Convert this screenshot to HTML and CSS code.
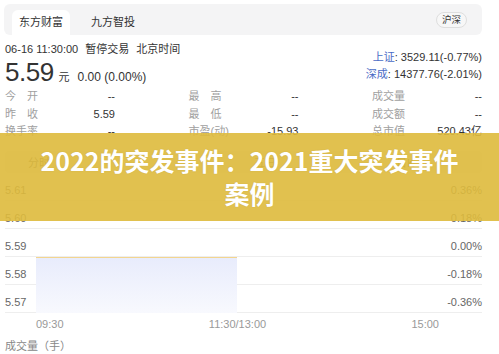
FILE: index.html
```html
<!DOCTYPE html>
<html lang="zh-CN">
<head>
<meta charset="utf-8">
<title>东方财富</title>
<link rel="stylesheet" href="styles.css">
</head>
<body>
<div class="page">
  <div class="tabbar">
    <div class="tab active">东方财富</div>
    <div class="tab">九方智投</div>
    <div class="pill">沪深</div>
  </div>

  <div class="quote">
    <div class="quote-left">
      <div class="meta"><span>06-16 11:30:00</span><span class="gap">暂停交易</span><span class="gap">北京时间</span></div>
      <div class="price-line"><span class="price">5.59</span><span class="unit">元</span><span class="change">0.00 (0.00%)</span></div>
    </div>
    <div class="quote-right">
      <div><span class="idx">上证</span>: 3529.11(-0.77%)</div>
      <div><span class="idx">深成</span>: 14377.76(-2.01%)</div>
    </div>
  </div>

  <div class="stats">
    <div class="row">
      <div class="grp"><span class="lbl">今开</span><span class="val">--</span></div>
      <div class="grp"><span class="lbl">最高</span><span class="val">--</span></div>
      <div class="grp"><span class="lbl">成交量</span><span class="val">--</span></div>
    </div>
    <div class="row">
      <div class="grp"><span class="lbl">昨收</span><span class="val">5.59</span></div>
      <div class="grp"><span class="lbl">最低</span><span class="val">--</span></div>
      <div class="grp"><span class="lbl">成交额</span><span class="val">--</span></div>
    </div>
    <div class="row">
      <div class="grp"><span class="lbl">换手率</span><span class="val">--</span></div>
      <div class="grp"><span class="lbl free">市盈(动)</span><span class="val">-15.93</span></div>
      <div class="grp"><span class="lbl">总市值</span><span class="val">520.43亿</span></div>
    </div>
  </div>

  <div class="periods">
    <span class="period p1">分时</span>
    <span class="period p2">五日</span>
    <span class="period p3">日K</span>
  </div>

  <div class="chart">
    <div class="grid-row"><span>5.61</span><span>0.36%</span></div>
    <div class="grid-row"><span>5.60</span><span>0.18%</span></div>
    <div class="grid-row"><span>5.59</span><span>0.00%</span></div>
    <div class="grid-row"><span>5.58</span><span>-0.18%</span></div>
    <div class="grid-row"><span>5.57</span><span>-0.36%</span></div>
    <div class="area"></div>
  </div>

  <div class="xaxis">
    <span>09:30</span><span>11:30/13:00</span><span>15:00</span>
  </div>
  <div class="vol">成交量（手）</div>
</div>

<div class="banner">2022的突发事件：2021重大突发事件<br>案例</div>
</body>
</html>
```

FILE: styles.css
```css
* { box-sizing: border-box; }
html, body { margin: 0; padding: 0; background: #fff; }
body {
  font-family: "Liberation Sans", "Noto Sans CJK SC", sans-serif;
  color: #333;
  font-size: 11px;
  width: 499px;
  height: 354px;
  overflow: hidden;
  position: relative;
}
.page { padding: 4px 17px 0 4px; }

.tabbar {
  height: 31px;
  background: #f4f4f5;
  border-radius: 6px;
  display: flex;
  align-items: flex-end;
  padding: 0 15px 0 8px;
}
.tab {
  width: 58px;
  height: 25px;
  line-height: 25px;
  text-align: center;
  font-size: 11px;
  color: #333;
  border-radius: 6px 6px 0 0;
}
.tab + .tab { margin-left: 14px; }
.tab.active { background: #fff; }
.pill {
  margin-left: auto;
  align-self: center;
  font-size: 9.5px;
  line-height: 12px;
  padding: 1px 5px;
  border: 1px solid #dedede;
  border-radius: 8px;
  background: #f7f7f7;
  color: #333;
}

.quote { display: flex; justify-content: space-between; padding-left: 1px; margin-top: 6px; }
.meta { line-height: 16px; font-size: 11px; }
.meta .gap { margin-left: 7px; }
.price-line { display: flex; align-items: baseline; height: 30px; }
.price { font-size: 26px; line-height: 30px; letter-spacing: -0.5px; }
.unit { font-size: 11px; margin-left: 5px; }
.change { font-size: 12px; margin-left: 8px; }
.quote-right { margin-top: 8px; text-align: right; line-height: 17px; font-size: 11px; }
.idx { color: #4a6cc6; }

.stats { margin-top: 1px; padding-left: 1px; }
.row { display: flex; justify-content: space-between; line-height: 17.5px; }
.grp { width: 110px; display: flex; justify-content: space-between; }
.lbl { color: #a0a0a0; width: 33px; text-align: justify; text-align-last: justify; }
.lbl.free { width: auto; }
.val { color: #333; }

.periods {
  margin-top: 10px;
  height: 22px;
  background: #f5f5f5;
  border-radius: 3px;
  margin-left: 1px;
  display: flex;
  align-items: center;
  font-size: 11px;
  color: #666;
}
.period { width: 60px; }
.p1 { margin-left: 23px; }
.p2 { margin-left: 166px; }
.p3 { margin-left: 82px; }

.chart { position: relative; margin-top: 1px; margin-left: 1px; }
.grid-row {
  height: 28px;
  border-bottom: 1px solid #eeeeee;
  display: flex;
  justify-content: space-between;
  align-items: flex-end;
  padding-bottom: 3px;
  line-height: 14px;
  color: #666;
  font-size: 11px;
}
.grid-row:first-child { height: 27px; }
.area {
  position: absolute;
  left: 31px;
  top: 83px;
  width: 201px;
  height: 56px;
  border-top: 1px solid #f3d58f;
  background: linear-gradient(#e8ecfc, #f8f9fe);
}

.xaxis {
  display: flex;
  justify-content: space-between;
  width: 403px;
  margin-left: 32px;
  line-height: 22px;
  color: #999;
  font-size: 11px;
}
.vol { padding-left: 1px; line-height: 22px; color: #888; font-size: 11px; }

.banner {
  position: absolute;
  left: 0;
  top: 133px;
  width: 499px;
  height: 88px;
  background: rgba(222, 186, 60, 0.9);
  color: #fff;
  font-family: "Noto Sans CJK SC", sans-serif;
  font-weight: 700;
  font-size: 25px;
  line-height: 33px;
  text-align: center;
  padding-top: 11px;
  text-shadow: 0 0 1px rgba(120, 90, 0, 0.25);
}
```
